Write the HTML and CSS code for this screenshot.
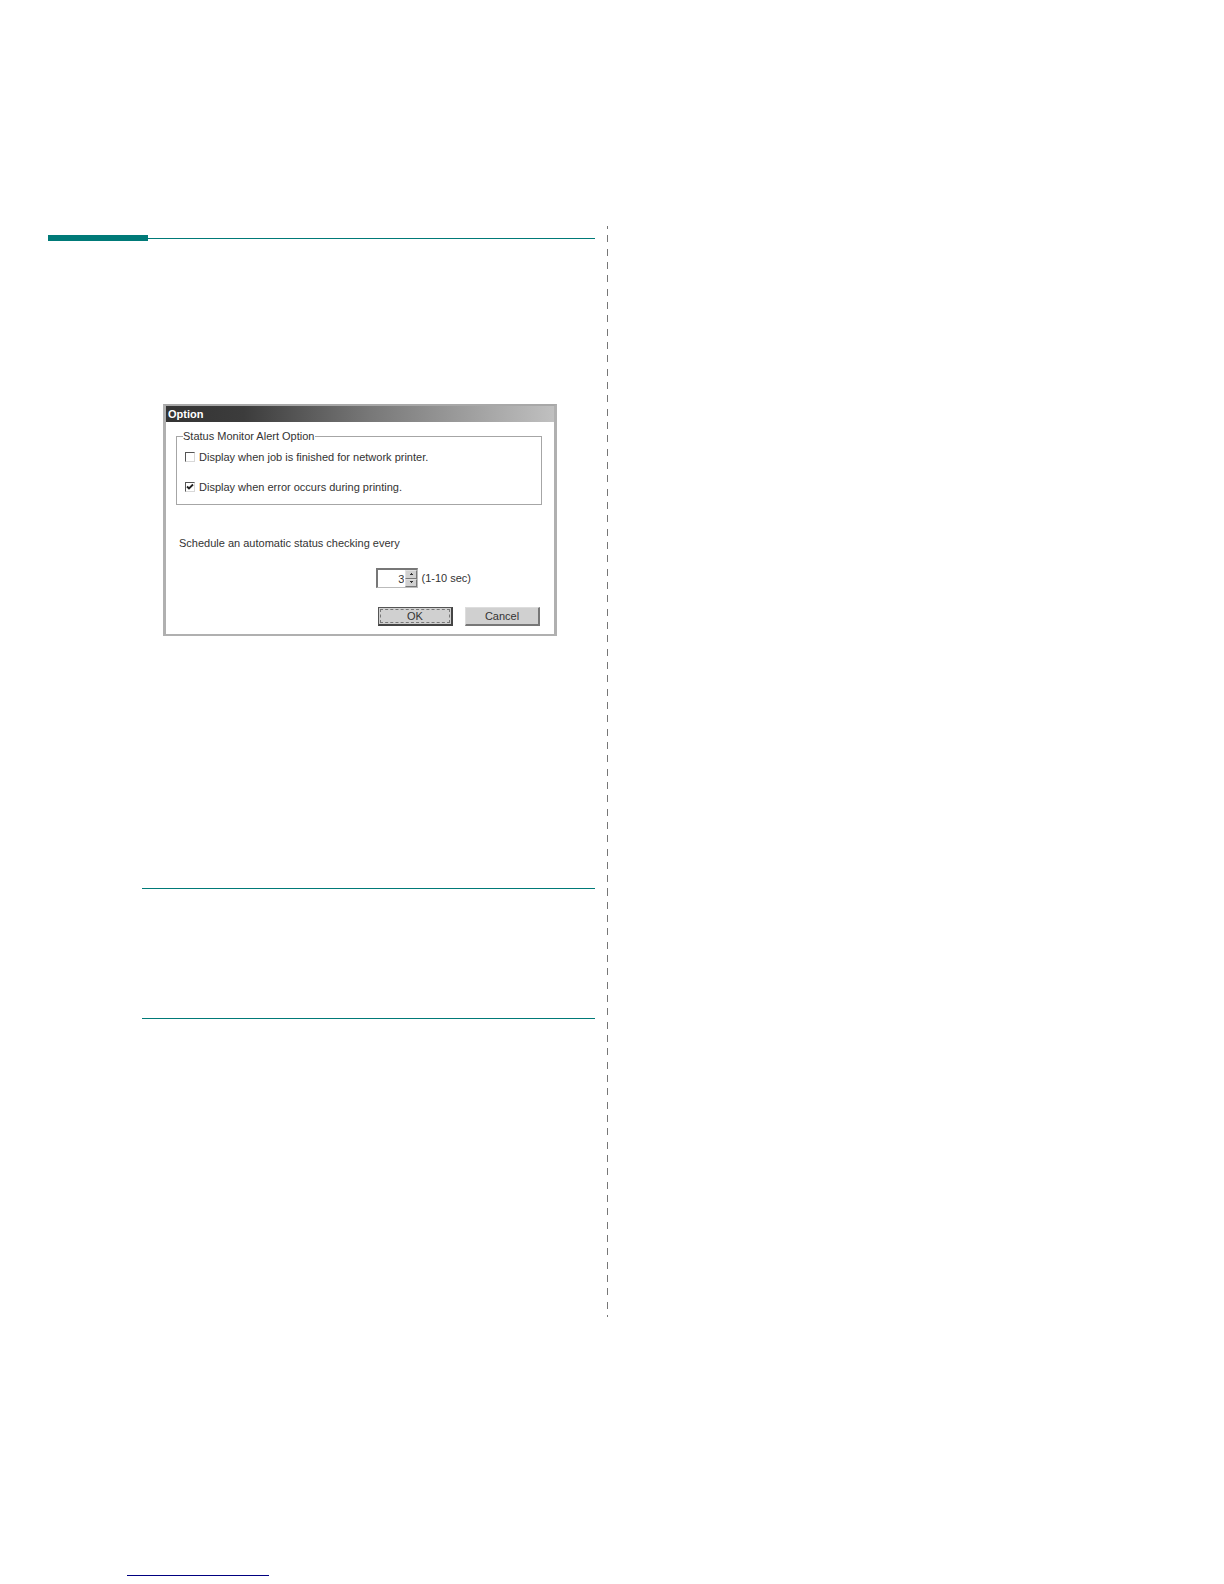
FILE: index.html
```html
<!DOCTYPE html>
<html lang="en">
<head>
<meta charset="utf-8">
<meta name="viewport" content="width=device-width, initial-scale=1">
<title>Option</title>
<link rel="stylesheet" href="styles.css">
</head>
<body>
<main class="columns">
  <section class="column">
    <div class="section-rule"></div>
    <form class="dialog">
      <h1 class="titlebar">Option</h1>
      <div class="dialog-body">
        <fieldset class="group">
          <legend>Status Monitor Alert Option</legend>
          <label class="check"><input type="checkbox">Display when job is finished for network printer.</label>
          <label class="check"><input type="checkbox" checked>Display when error occurs during printing.</label>
        </fieldset>
        <label class="schedule" for="interval">Schedule an automatic status checking every</label>
        <div class="interval">
          <div class="spinner">
            <input id="interval" type="number" min="1" max="10" value="3">
            <div class="steps">
              <button type="button" class="step"><svg viewBox="0 0 5 3"><path d="M2 0h1v1h1v1H1V1h1z"/></svg></button>
              <button type="button" class="step"><svg viewBox="0 0 5 3"><path d="M1 0h3v1H3v1H2V1H1z"/></svg></button>
            </div>
          </div>
          <span>(1-10 sec)</span>
        </div>
        <div class="actions">
          <button type="button" class="button default"><span>OK</span></button>
          <button type="button" class="button">Cancel</button>
        </div>
      </div>
    </form>
    <div class="note"></div>
  </section>
  <div class="divider"></div>
</main>
<footer class="footer"><div class="footer-line"></div></footer>
</body>
</html>
```
FILE: styles.css
```css
* {
  box-sizing: border-box;
}

body {
  margin: 0;
  background: #fff;
  color: #333;
  font: 11px/16px "Liberation Sans", Arial, sans-serif;
}

.columns {
  display: grid;
  grid-template-columns: 1fr 1px 1fr;
  padding: 226px 57px 0 48px;
}

.column {
  padding: 9px 12px 0 0;
}

.divider {
  height: 1091px;
  background: repeating-linear-gradient(#777 0 7px, transparent 7px 13.33px) 0 -4px / 1px 1095px no-repeat;
}

/* Thick tab followed by a hairline */
.section-rule {
  height: 6px;
  background:
    linear-gradient(#007a78, #007a78) 0 0 / 100px 6px no-repeat,
    linear-gradient(#007a78, #007a78) 0 3px / 100% 1px no-repeat;
}

.dialog {
  max-width: 394px;
  margin: 163px 0 0 115px;
  border: 3px solid #b0b0b0;
  border-top: 2px solid #a8a8a8;
  border-bottom-width: 2px;
}

.titlebar {
  margin: 0;
  padding: 0 2px;
  background: linear-gradient(90deg, #333 0%, #3c3c3c 20%, #777 52%, #c0c0c0 100%);
  color: #fff;
  font-size: 11px;
  line-height: 16px;
}

.dialog-body {
  padding: 6px 12px 8px 10px;
}

.group {
  display: flow-root;
  margin: 0;
  padding: 0 8px 9px;
  border: 1px solid #a6a6a6;
}

.group legend {
  padding: 0 1px 0 0;
  margin-left: -2px;
}

.check {
  display: flex;
  align-items: center;
  gap: 4px;
  margin-top: 5px;
}

.check + .check {
  margin-top: 14px;
}

.check input {
  appearance: none;
  width: 10px;
  height: 10px;
  margin: 0;
  border: 1px solid #d8d8d8;
  border-top-color: #555;
  border-left-color: #555;
}

.check input:checked {
  background: url("data:image/svg+xml,%3Csvg xmlns='http://www.w3.org/2000/svg' viewBox='0 0 8 8'%3E%3Cpath d='M1 3.5L3 5.5L7 1.5' fill='none' stroke='%23222' stroke-width='1.8'/%3E%3C/svg%3E") center / 8px 8px no-repeat;
}

.schedule {
  display: block;
  margin: 30px 0 0 3px;
}

.interval,
.actions {
  display: flex;
  justify-content: flex-end;
}

.interval {
  align-items: center;
  gap: 3px;
  margin-top: 17px;
  padding-right: 71px;
}

.spinner {
  display: flex;
  width: 42px;
  height: 20px;
  border: 1px solid #bbb;
  border-top: 2px solid #777;
  border-left: 2px solid #777;
}

.spinner input {
  appearance: textfield;
  flex: 1;
  min-width: 0;
  margin: 0;
  padding: 0 1px 0 0;
  border: 0;
  background: #fff;
  color: #333;
  font: inherit;
  text-align: right;
}

.spinner input::-webkit-inner-spin-button {
  appearance: none;
  margin: 0;
}

.steps {
  display: grid;
  width: 12px;
}

.step {
  display: grid;
  place-items: center;
  min-height: 0;
  padding: 0;
  border: 1px solid #e0e0e0;
  border-right-color: #777;
  border-bottom-color: #777;
  background: #d0d0d0;
}

.step svg {
  width: 5px;
  height: 3px;
  fill: #333;
}

.actions {
  gap: 12px;
  margin-top: 19px;
  padding-right: 2px;
}

.button {
  width: 75px;
  height: 19px;
  padding: 0;
  border: 1px solid #ddd;
  border-right: 2px solid #777;
  border-bottom: 2px solid #777;
  background: #d0d0d0;
  color: #333;
  font: inherit;
  line-height: 14px;
}

.default {
  padding: 1px;
  border: 1px solid #555;
  border-right: 2px solid #444;
  border-bottom: 2px solid #444;
}

.default span {
  display: block;
  border: 1px dashed #777;
  line-height: 12px;
}

.note {
  height: 131px;
  margin: 252px 0 0 94px;
  border: solid #007a78;
  border-width: 1px 0;
}

.footer {
  padding: 258px 0 8px 127px;
}

.footer-line {
  width: 142px;
  height: 1px;
  background: #000080;
}
```
